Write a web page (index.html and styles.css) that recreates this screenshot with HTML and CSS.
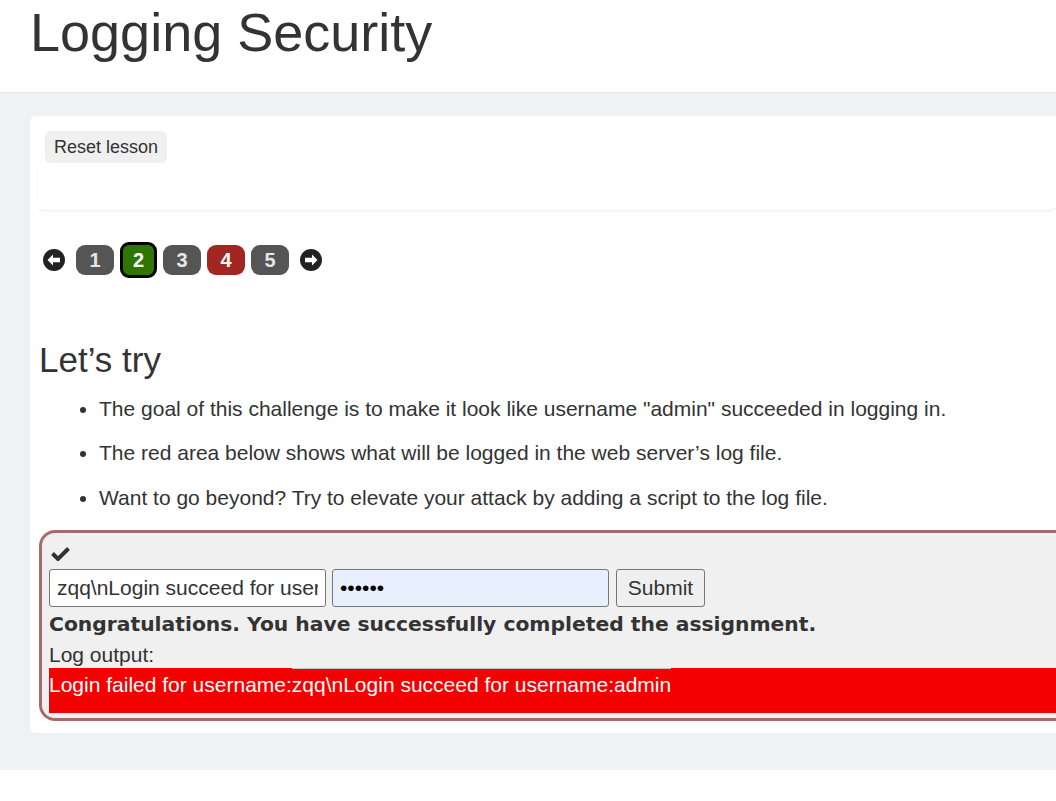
FILE: index.html
```html
<!DOCTYPE html>
<html lang="en">
<head>
    <meta charset="UTF-8" />
    <title>Logging Security</title>
    <link rel="stylesheet" href="styles.css">
</head>
<body>

    <div class="page-header">
        <h1 class="page-title">Logging Security</h1>
    </div>

    <div class="main">
        <div class="lesson-card">
            <button class="reset-btn">Reset lesson</button>
            <div class="lesson-panel"></div>

            <div class="pager">
                <span class="pager-arrow">
                    <svg width="24" height="24" viewBox="0 0 24 24"><circle cx="12" cy="12" r="11" fill="#222"/><path d="M5.5 12 L11 6.5 L11 9.8 L18 9.8 L18 14.2 L11 14.2 L11 17.5 Z" fill="#fff"/></svg>
                </span>
                <span class="page-btn">1</span>
                <span class="page-btn current">2</span>
                <span class="page-btn">3</span>
                <span class="page-btn failed">4</span>
                <span class="page-btn">5</span>
                <span class="pager-arrow">
                    <svg width="24" height="24" viewBox="0 0 24 24"><circle cx="12" cy="12" r="11" fill="#222"/><path d="M18.5 12 L13 6.5 L13 9.8 L6 9.8 L6 14.2 L13 14.2 L13 17.5 Z" fill="#fff"/></svg>
                </span>
            </div>

            <h2 class="section-title">Let’s try</h2>
            <ul class="task-list">
                <li>The goal of this challenge is to make it look like username "admin" succeeded in logging in.</li>
                <li>The red area below shows what will be logged in the web server’s log file.</li>
                <li>Want to go beyond? Try to elevate your attack by adding a script to the log file.</li>
            </ul>

            <div class="attack-box">
                <div class="attack-check">
                    <svg width="19" height="15" viewBox="0 0 19 15"><path d="M1.5 7.5 L7 13 L17.5 2.5" fill="none" stroke="#333" stroke-width="4"/></svg>
                </div>
                <form class="attack-form">
                    <input class="field" type="text" value="zqq\nLogin succeed for username:admin">
                    <input class="field field-filled" type="password" value="123456">
                    <button type="button" class="submit-btn">Submit</button>
                </form>
                <div class="feedback">Congratulations. You have successfully completed the assignment.</div>
                <div class="log-label">Log output:</div>
                <div class="log-output">
                    <div class="log-rule"></div>
                    Login failed for username:zqq\nLogin succeed for username:admin
                </div>
            </div>
        </div>
    </div>

</body>
</html>
```

FILE: styles.css
```css
body {
    font-family: "Liberation Sans", Arial, sans-serif;
    color: #333;
    margin: 0;
    background-color: #fff;
    overflow: hidden;
}

.page-header {
    background-color: #fff;
    height: 92px;
    border-bottom: 1px solid #e3e5ea;
    padding-left: 30px;
}

.page-title {
    margin: 0;
    font-size: 54px;
    font-weight: normal;
    line-height: 64px;
    color: #333;
}

.main {
    background-color: #eff1f5;
    padding: 23px 0 37px 30px;
}

.lesson-card {
    background-color: #fff;
    border-radius: 6px 0 0 6px;
    padding: 15px 0 12px 8px;
}

.reset-btn {
    font-family: inherit;
    font-size: 18px;
    color: #333;
    background-color: #f0f0f0;
    border: none;
    border-radius: 5px;
    padding: 0 9px;
    height: 32px;
    margin-left: 7px;
}

.lesson-panel {
    height: 47px;
    border-radius: 5px;
    box-shadow: 0 1px 2px rgba(0, 0, 0, 0.08);
}

.pager {
    display: flex;
    align-items: center;
    gap: 6px;
    margin-top: 32px;
    margin-left: 4px;
}

.pager-arrow {
    display: flex;
    width: 24px;
    height: 24px;
}

.pager-arrow:first-child {
    margin-right: 4px;
}

.pager-arrow:last-child {
    margin-left: 4px;
}

.page-btn {
    width: 38px;
    height: 30px;
    line-height: 30px;
    text-align: center;
    border-radius: 9px;
    background-color: #555;
    color: #e6e6e6;
    font-weight: bold;
    font-size: 20px;
    box-sizing: border-box;
}

.page-btn.current {
    background-color: #2f7600;
    border: 3px solid #000;
    line-height: 30px;
    width: 37px;
    height: 36px;
    color: #fff;
}

.page-btn.failed {
    background-color: #a32622;
    color: #fff;
}

.section-title {
    font-size: 35px;
    font-weight: normal;
    margin: 62px 0 0 1px;
    line-height: 40px;
}

.task-list {
    margin: 17px 0 0;
    padding-left: 61px;
    font-size: 21px;
}

.task-list li {
    line-height: 24px;
    margin-bottom: 20.3px;
}

.attack-box {
    margin-left: 1px;
    border: 3px solid #a66b6b;
    border-right: none;
    border-radius: 16px 0 0 16px;
    background-color: #f0f0f0;
    padding: 13px 0 5px 7px;
}

.attack-check {
    height: 21px;
    padding-left: 2px;
}

.attack-form {
    display: flex;
    gap: 6px;
    margin: 2px 0 0;
}

.field {
    font-family: inherit;
    font-size: 21px;
    color: #333;
    width: 277px;
    height: 38px;
    box-sizing: border-box;
    border: 1px solid #767676;
    border-radius: 3px;
    padding: 0 7px;
    background-color: #fff;
}

.field-filled {
    background-color: #e8f0fe;
    color: #000;
    width: 277px;
}

.submit-btn {
    font-family: inherit;
    font-size: 21px;
    color: #333;
    height: 38px;
    width: 89px;
    border: 1px solid #767676;
    border-radius: 3px;
    background-color: #efefef;
    margin-left: 1px;
}

.feedback {
    font-family: "DejaVu Sans", sans-serif;
    font-weight: bold;
    font-size: 20.3px;
    line-height: 34px;
}

.log-label {
    font-size: 21px;
    line-height: 27px;
}

.log-output {
    position: relative;
    background-color: #f50000;
    color: #fff;
    font-size: 21px;
    line-height: 34px;
    height: 45px;
}

.log-rule {
    position: absolute;
    top: 0;
    left: 243px;
    width: 379px;
    height: 1px;
    background-color: #c4c4c4;
}
```
